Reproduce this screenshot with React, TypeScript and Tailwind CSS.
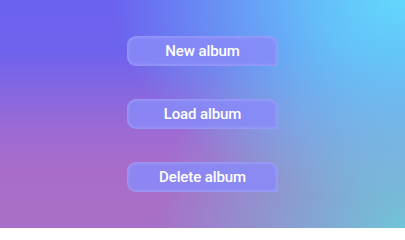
import React from "react";

const labels = ["New album", "Load album", "Delete album"];

export default function App() {
  return (
    <div className="w-[405px] h-[228px] overflow-hidden bg-[radial-gradient(ellipse_72%_90%_at_100%_0%,#62d8fc_0%,rgba(98,216,252,0.78)_30%,rgba(98,216,252,0)_100%),radial-gradient(ellipse_62%_100%_at_100%_100%,#70c4d8_0%,rgba(112,196,216,0.65)_35%,rgba(112,196,216,0)_100%),linear-gradient(to_bottom,#6c62f0_0%,#6d63ee_22%,#9a6ad6_55%,#a96dc8_75%,#a86fc8_100%)] flex flex-col items-center pt-[36px] gap-[33px] font-['Roboto',sans-serif]">
      {labels.map((l) => (
        <button
          key={l}
          className="w-[151px] h-[30px] rounded-tl-[9px] rounded-tr-[9px] rounded-bl-[9px] rounded-br-none bg-[rgba(136,138,248,0.85)] border border-[rgba(255,255,255,0.12)] shadow-[inset_0_0_3px_rgba(255,255,255,0.25)] text-white text-[15px] font-medium tracking-[-0.1px] flex items-center justify-center leading-none"
        >
          {l}
        </button>
      ))}
    </div>
  );
}
